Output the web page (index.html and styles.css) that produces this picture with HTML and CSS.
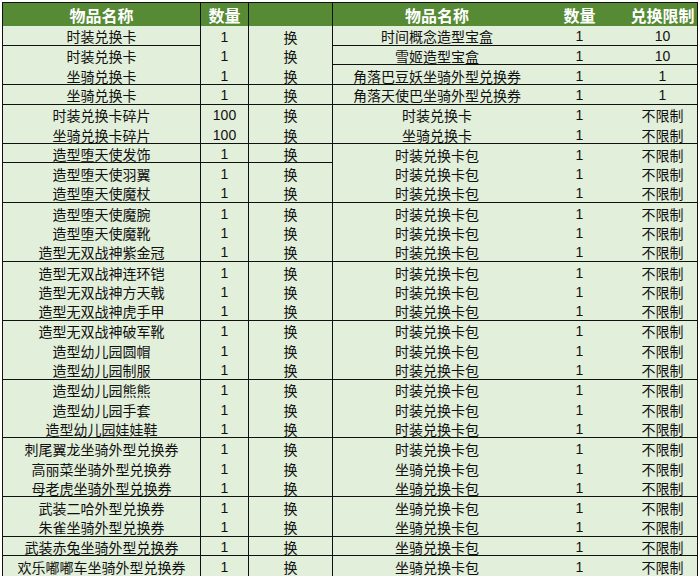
FILE: index.html
```html
<!DOCTYPE html>
<html lang="zh">
<head>
<meta charset="utf-8">
<link rel="stylesheet" href="styles.css">
</head>
<body>
<div class="sheet">
  <div class="h c1">物品名称</div><div class="h c2">数量</div><div class="h c3"></div><div class="h c4">物品名称</div><div class="h c5">数量</div><div class="h c6">兑换限制</div>

  <div class="c c1 b">时装兑换卡</div><div class="c c2 n">1</div><div class="c c3">换</div><div class="c c4 b">时间概念造型宝盒</div><div class="c c5 n b">1</div><div class="c c6 n b">10</div>
  <div class="c c1">时装兑换卡</div><div class="c c2 n">1</div><div class="c c3">换</div><div class="c c4 b">雪姬造型宝盒</div><div class="c c5 n b">1</div><div class="c c6 n b">10</div>
  <div class="c c1 b">坐骑兑换卡</div><div class="c c2 n b">1</div><div class="c c3 b">换</div><div class="c c4 b">角落巴豆妖坐骑外型兑换券</div><div class="c c5 n b">1</div><div class="c c6 n b">1</div>
  <div class="c c1 b">坐骑兑换卡</div><div class="c c2 n b">1</div><div class="c c3 b">换</div><div class="c c4 b">角落天使巴坐骑外型兑换券</div><div class="c c5 n b">1</div><div class="c c6 n b">1</div>
  <div class="c c1">时装兑换卡碎片</div><div class="c c2 n">100</div><div class="c c3">换</div><div class="c c4">时装兑换卡</div><div class="c c5 n">1</div><div class="c c6">不限制</div>
  <div class="c c1 b">坐骑兑换卡碎片</div><div class="c c2 n b">100</div><div class="c c3 b">换</div><div class="c c4 b">坐骑兑换卡</div><div class="c c5 n b">1</div><div class="c c6 b">不限制</div>
  <div class="c c1 b">造型堕天使发饰</div><div class="c c2 n b">1</div><div class="c c3 b">换</div><div class="c c4">时装兑换卡包</div><div class="c c5 n">1</div><div class="c c6">不限制</div>
  <div class="c c1">造型堕天使羽翼</div><div class="c c2 n">1</div><div class="c c3">换</div><div class="c c4">时装兑换卡包</div><div class="c c5 n">1</div><div class="c c6">不限制</div>
  <div class="c c1 b">造型堕天使魔杖</div><div class="c c2 n b">1</div><div class="c c3 b">换</div><div class="c c4 b">时装兑换卡包</div><div class="c c5 n b">1</div><div class="c c6 b">不限制</div>
  <div class="c c1">造型堕天使魔腕</div><div class="c c2 n">1</div><div class="c c3">换</div><div class="c c4">时装兑换卡包</div><div class="c c5 n">1</div><div class="c c6">不限制</div>
  <div class="c c1">造型堕天使魔靴</div><div class="c c2 n">1</div><div class="c c3">换</div><div class="c c4">时装兑换卡包</div><div class="c c5 n">1</div><div class="c c6">不限制</div>
  <div class="c c1 b">造型无双战神紫金冠</div><div class="c c2 n b">1</div><div class="c c3 b">换</div><div class="c c4 b">时装兑换卡包</div><div class="c c5 n b">1</div><div class="c c6 b">不限制</div>
  <div class="c c1">造型无双战神连环铠</div><div class="c c2 n">1</div><div class="c c3">换</div><div class="c c4">时装兑换卡包</div><div class="c c5 n">1</div><div class="c c6">不限制</div>
  <div class="c c1">造型无双战神方天戟</div><div class="c c2 n">1</div><div class="c c3">换</div><div class="c c4">时装兑换卡包</div><div class="c c5 n">1</div><div class="c c6">不限制</div>
  <div class="c c1 b">造型无双战神虎手甲</div><div class="c c2 n b">1</div><div class="c c3 b">换</div><div class="c c4 b">时装兑换卡包</div><div class="c c5 n b">1</div><div class="c c6 b">不限制</div>
  <div class="c c1">造型无双战神破军靴</div><div class="c c2 n">1</div><div class="c c3">换</div><div class="c c4">时装兑换卡包</div><div class="c c5 n">1</div><div class="c c6">不限制</div>
  <div class="c c1">造型幼儿园圆帽</div><div class="c c2 n">1</div><div class="c c3">换</div><div class="c c4">时装兑换卡包</div><div class="c c5 n">1</div><div class="c c6">不限制</div>
  <div class="c c1 b">造型幼儿园制服</div><div class="c c2 n b">1</div><div class="c c3 b">换</div><div class="c c4 b">时装兑换卡包</div><div class="c c5 n b">1</div><div class="c c6 b">不限制</div>
  <div class="c c1">造型幼儿园熊熊</div><div class="c c2 n">1</div><div class="c c3">换</div><div class="c c4">时装兑换卡包</div><div class="c c5 n">1</div><div class="c c6">不限制</div>
  <div class="c c1">造型幼儿园手套</div><div class="c c2 n">1</div><div class="c c3">换</div><div class="c c4">时装兑换卡包</div><div class="c c5 n">1</div><div class="c c6">不限制</div>
  <div class="c c1 b">造型幼儿园娃娃鞋</div><div class="c c2 n b">1</div><div class="c c3 b">换</div><div class="c c4 b">时装兑换卡包</div><div class="c c5 n b">1</div><div class="c c6 b">不限制</div>
  <div class="c c1">刺尾翼龙坐骑外型兑换券</div><div class="c c2 n">1</div><div class="c c3">换</div><div class="c c4">时装兑换卡包</div><div class="c c5 n">1</div><div class="c c6">不限制</div>
  <div class="c c1">高丽菜坐骑外型兑换券</div><div class="c c2 n">1</div><div class="c c3">换</div><div class="c c4">坐骑兑换卡包</div><div class="c c5 n">1</div><div class="c c6">不限制</div>
  <div class="c c1 b">母老虎坐骑外型兑换券</div><div class="c c2 n b">1</div><div class="c c3 b">换</div><div class="c c4 b">坐骑兑换卡包</div><div class="c c5 n b">1</div><div class="c c6 b">不限制</div>
  <div class="c c1">武装二哈外型兑换券</div><div class="c c2 n">1</div><div class="c c3">换</div><div class="c c4">坐骑兑换卡包</div><div class="c c5 n">1</div><div class="c c6">不限制</div>
  <div class="c c1 b">朱雀坐骑外型兑换券</div><div class="c c2 n b">1</div><div class="c c3 b">换</div><div class="c c4 b">坐骑兑换卡包</div><div class="c c5 n b">1</div><div class="c c6 b">不限制</div>
  <div class="c c1 b">武装赤兔坐骑外型兑换券</div><div class="c c2 n b">1</div><div class="c c3 b">换</div><div class="c c4 b">坐骑兑换卡包</div><div class="c c5 n b">1</div><div class="c c6 b">不限制</div>
  <div class="c c1">欢乐嘟嘟车坐骑外型兑换券</div><div class="c c2 n">1</div><div class="c c3">换</div><div class="c c4">坐骑兑换卡包</div><div class="c c5 n">1</div><div class="c c6">不限制</div>
</div>
</body>
</html>
```

FILE: styles.css
```css
html, body {
  margin: 0;
  padding: 0;
  background: #ffffff;
}

.sheet {
  margin: 2px 0 0 2px;
  width: 696px;
  box-sizing: border-box;
  border-top: 1px solid #111;
  border-left: 1px solid #111;
  border-right: 1px solid #111;
  display: grid;
  grid-template-columns: 198px 48px 84px 208px 77px 79px;
  grid-template-rows: 23px repeat(28, 19.643px);
  background: #e2efda;
  font-family: "Noto Sans CJK SC", "Noto Sans", sans-serif;
  color: #111;
}

.h {
  background: #578a35;
  color: #ffffff;
  font-weight: bold;
  font-size: 16px;
  display: flex;
  align-items: center;
  justify-content: center;
  box-sizing: border-box;
  line-height: 1;
}

.c {
  display: flex;
  align-items: center;
  justify-content: center;
  box-sizing: border-box;
  font-size: 14px;
  line-height: 1;
  padding-top: 2px;
  white-space: nowrap;
}

.n {
  font-family: "Liberation Sans", Arial, sans-serif;
  font-size: 14px;
}

.c1, .c2, .c3 {
  border-right: 1px solid #111;
}

.c6 {
  padding-left: 10px;
}

.b {
  border-bottom: 1px solid #111;
}
```
